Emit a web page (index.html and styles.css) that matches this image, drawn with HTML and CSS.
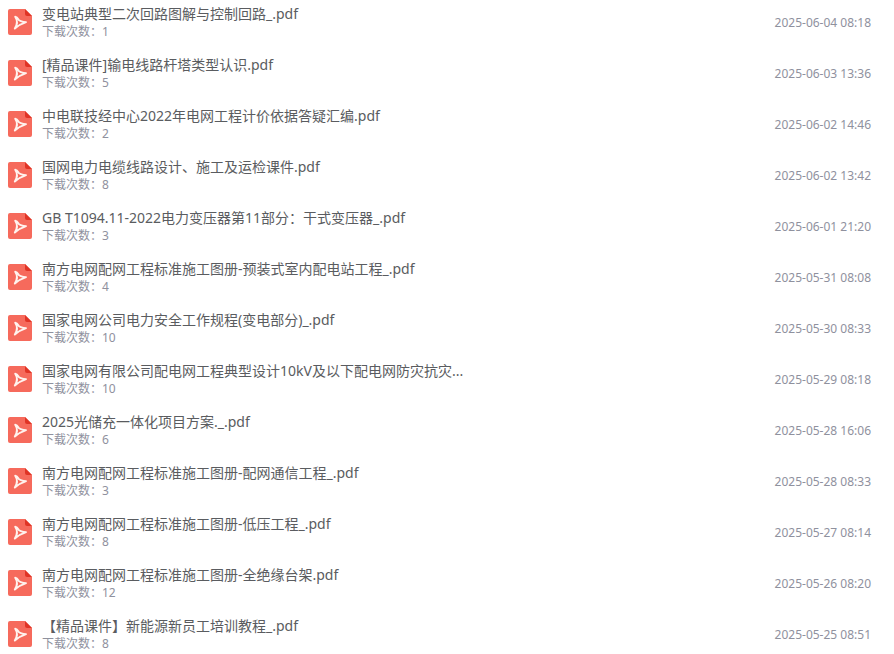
FILE: index.html
```html
<!DOCTYPE html>
<html lang="zh-CN">

<head>
    <meta charset="UTF-8">
    <meta name="viewport" content="width=device-width, initial-scale=1.0">
    <title>下载列表</title>
    <link rel="stylesheet" href="styles.css">
</head>

<body>
    <!-- PDF icon, shared by all rows -->
    <svg class="sprite" aria-hidden="true">
        <symbol id="pdf" viewBox="0 0 24 26">
            <path fill="#f66a5c" d="M2 0h15l7 7v17a2 2 0 0 1-2 2H2a2 2 0 0 1-2-2V2a2 2 0 0 1 2-2z" />
            <path fill="#e03426" d="M17 0l7 7h-5a2 2 0 0 1-2-2z" />
            <path fill="none" stroke="#fff3ee" stroke-width="1.9" stroke-linecap="round" stroke-linejoin="round" d="M7.200 7.800C9.800 8.200 10 10 11 11.200C12.500 12.800 15 13 18 13.200C15 14.200 11.500 15.200 6.800 19.500C9.200 16 10 12 7.200 7.800" />
        </symbol>
    </svg>

    <ul class="file-list">
        <li class="file">
            <svg class="file-icon" aria-hidden="true"><use href="#pdf" /></svg>
            <div class="file-info">
                <a class="file-name" href="#">变电站典型二次回路图解与控制回路_.pdf</a>
                <p class="file-count">下载次数：1</p>
            </div>
            <time class="file-time">2025-06-04 08:18</time>
        </li>
        <li class="file">
            <svg class="file-icon" aria-hidden="true"><use href="#pdf" /></svg>
            <div class="file-info">
                <a class="file-name" href="#">[精品课件]输电线路杆塔类型认识.pdf</a>
                <p class="file-count">下载次数：5</p>
            </div>
            <time class="file-time">2025-06-03 13:36</time>
        </li>
        <li class="file">
            <svg class="file-icon" aria-hidden="true"><use href="#pdf" /></svg>
            <div class="file-info">
                <a class="file-name" href="#">中电联技经中心2022年电网工程计价依据答疑汇编.pdf</a>
                <p class="file-count">下载次数：2</p>
            </div>
            <time class="file-time">2025-06-02 14:46</time>
        </li>
        <li class="file">
            <svg class="file-icon" aria-hidden="true"><use href="#pdf" /></svg>
            <div class="file-info">
                <a class="file-name" href="#">国网电力电缆线路设计、施工及运检课件.pdf</a>
                <p class="file-count">下载次数：8</p>
            </div>
            <time class="file-time">2025-06-02 13:42</time>
        </li>
        <li class="file">
            <svg class="file-icon" aria-hidden="true"><use href="#pdf" /></svg>
            <div class="file-info">
                <a class="file-name" href="#">GB T1094.11-2022电力变压器第11部分：干式变压器_.pdf</a>
                <p class="file-count">下载次数：3</p>
            </div>
            <time class="file-time">2025-06-01 21:20</time>
        </li>
        <li class="file">
            <svg class="file-icon" aria-hidden="true"><use href="#pdf" /></svg>
            <div class="file-info">
                <a class="file-name" href="#">南方电网配网工程标准施工图册-预装式室内配电站工程_.pdf</a>
                <p class="file-count">下载次数：4</p>
            </div>
            <time class="file-time">2025-05-31 08:08</time>
        </li>
        <li class="file">
            <svg class="file-icon" aria-hidden="true"><use href="#pdf" /></svg>
            <div class="file-info">
                <a class="file-name" href="#">国家电网公司电力安全工作规程(变电部分)_.pdf</a>
                <p class="file-count">下载次数：10</p>
            </div>
            <time class="file-time">2025-05-30 08:33</time>
        </li>
        <li class="file">
            <svg class="file-icon" aria-hidden="true"><use href="#pdf" /></svg>
            <div class="file-info">
                <a class="file-name" href="#">国家电网有限公司配电网工程典型设计10kV及以下配电网防灾抗灾...</a>
                <p class="file-count">下载次数：10</p>
            </div>
            <time class="file-time">2025-05-29 08:18</time>
        </li>
        <li class="file">
            <svg class="file-icon" aria-hidden="true"><use href="#pdf" /></svg>
            <div class="file-info">
                <a class="file-name" href="#">2025光储充一体化项目方案._.pdf</a>
                <p class="file-count">下载次数：6</p>
            </div>
            <time class="file-time">2025-05-28 16:06</time>
        </li>
        <li class="file">
            <svg class="file-icon" aria-hidden="true"><use href="#pdf" /></svg>
            <div class="file-info">
                <a class="file-name" href="#">南方电网配网工程标准施工图册-配网通信工程_.pdf</a>
                <p class="file-count">下载次数：3</p>
            </div>
            <time class="file-time">2025-05-28 08:33</time>
        </li>
        <li class="file">
            <svg class="file-icon" aria-hidden="true"><use href="#pdf" /></svg>
            <div class="file-info">
                <a class="file-name" href="#">南方电网配网工程标准施工图册-低压工程_.pdf</a>
                <p class="file-count">下载次数：8</p>
            </div>
            <time class="file-time">2025-05-27 08:14</time>
        </li>
        <li class="file">
            <svg class="file-icon" aria-hidden="true"><use href="#pdf" /></svg>
            <div class="file-info">
                <a class="file-name" href="#">南方电网配网工程标准施工图册-全绝缘台架.pdf</a>
                <p class="file-count">下载次数：12</p>
            </div>
            <time class="file-time">2025-05-26 08:20</time>
        </li>
        <li class="file">
            <svg class="file-icon" aria-hidden="true"><use href="#pdf" /></svg>
            <div class="file-info">
                <a class="file-name" href="#">【精品课件】新能源新员工培训教程_.pdf</a>
                <p class="file-count">下载次数：8</p>
            </div>
            <time class="file-time">2025-05-25 08:51</time>
        </li>
    </ul>
</body>

</html>
```
FILE: styles.css
```css
body {
    margin: 0;
    background-color: #fff;
    font-family: "Noto Sans", "Noto Sans CJK SC", sans-serif;
}

.sprite {
    display: none;
}

.file-list {
    display: flex;
    flex-direction: column;
    gap: 15px;
    margin: 0;
    padding: 4px 23px 0 8px;
    list-style: none;
}

.file {
    display: flex;
    align-items: center;
    gap: 10px;
}

.file-icon {
    flex: none;
    width: 24px;
    height: 26px;
}

.file-info {
    flex: 1;
    min-width: 0;
}

/* Long names are cut off on one line */
.file-name {
    display: block;
    overflow: hidden;
    color: #5a5c60;
    font-size: 14px;
    line-height: 20px;
    text-decoration: none;
    text-overflow: ellipsis;
    white-space: nowrap;
}

.file-name:hover {
    color: #f66a5c;
}

.file-count {
    margin: 0;
    color: #8f919e;
    font-size: 12px;
    line-height: 16px;
}

.file-time {
    flex: none;
    padding-top: 2px;
    color: #8f919e;
    font-size: 12px;
    line-height: 16px;
}
```
